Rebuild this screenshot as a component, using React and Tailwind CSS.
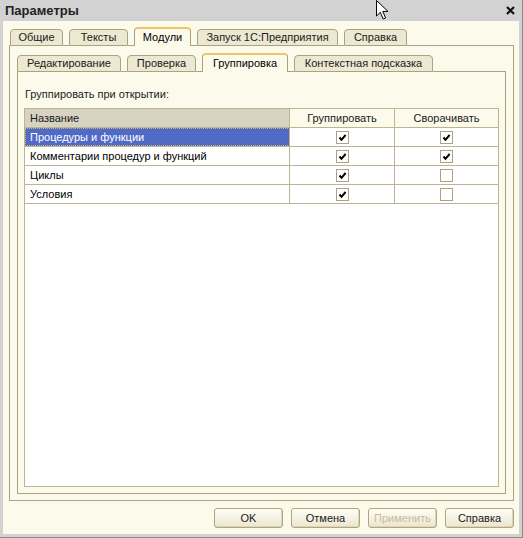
import React from "react";

const outerTabs = [
    { label: "Общие", w: "w-[53px]" },
    { label: "Тексты", w: "w-[59px]" },
    { label: "Модули", w: "w-[57px]", active: true },
    { label: "Запуск 1С:Предприятия", w: "w-[141px]" },
    { label: "Справка", w: "w-[63px]" },
];

const innerTabs = [
    { label: "Редактирование", w: "w-[104px]" },
    { label: "Проверка", w: "w-[69px]" },
    { label: "Группировка", w: "w-[86px]", active: true },
    { label: "Контекстная подсказка", w: "w-[139px]" },
];

const rows = [
    { name: "Процедуры и функции", group: true, fold: true, selected: true },
    { name: "Комментарии процедур и функций", group: true, fold: true },
    { name: "Циклы", group: true, fold: false },
    { name: "Условия", group: true, fold: false },
];

function Tab({ label, w, active }) {
    if (active) {
        return (
            <div className={`${w} h-[19px] shrink-0 flex items-center justify-center rounded-t-[4px] border border-b-0 border-[#aba37f] border-t-2 border-t-[#efc56a] bg-[#fcfaeb] text-[11px] text-black`}>
                {label}
            </div>
        );
    }
    return (
        <div className={`${w} h-[17px] shrink-0 flex items-center justify-center rounded-t-[4px] border border-[#aba37f] bg-[#ece8d1] text-[11px] text-[#1a1a1a]`}>
            {label}
        </div>
    );
}

function TabStrip({ tabs, lead }) {
    return (
        <div className="flex items-end h-[19px]">
            <div className={`${lead} self-stretch border-b border-[#aba37f]`} />
            {tabs.map((t, i) => (
                <React.Fragment key={t.label}>
                    {i > 0 && <div className="w-[6px] shrink-0 self-stretch border-b border-[#aba37f]" />}
                    <Tab {...t} />
                </React.Fragment>
            ))}
            <div className="flex-1 self-stretch border-b border-[#aba37f]" />
        </div>
    );
}

function CheckBox({ checked }) {
    return (
        <div className="w-[13px] h-[13px] border border-[#aaa283] bg-white flex items-center justify-center">
            {checked && (
                <svg width="11" height="11" viewBox="0 0 11 11">
                    <path d="M2.5 5.5 L4.5 7.8 L8.6 3" fill="none" stroke="#000" strokeWidth="2" />
                </svg>
            )}
        </div>
    );
}

function Button({ children, disabled }) {
    return (
        <button className={`w-[69px] h-[20px] rounded-[3px] border border-[#afa67f] bg-gradient-to-b from-[#fffef7] to-[#ebe6cf] text-[11px] font-normal shadow-[inset_-1px_-1px_0_#ddd6b8] ${disabled ? "text-[#c9ba98]" : "text-[#1a1a1a]"}`}>
            {children}
        </button>
    );
}

export default function App() {
    return (
        <div className="relative w-[523px] h-[538px] flex flex-col bg-[#d2d2d2] border-r border-b border-[#8a8a8a] font-['Liberation_Sans',Arial,sans-serif] overflow-hidden">
            {/* title bar */}
            <div className="h-[21px] shrink-0 flex items-center justify-between pl-[5px] pr-[7px]">
                <span className="text-[13px] font-bold text-[#222]">Параметры</span>
                <svg width="9" height="9" viewBox="0 0 9 9">
                    <path d="M1 1 L8 8 M8 1 L1 8" stroke="#111" strokeWidth="2.2" />
                </svg>
            </div>

            {/* mouse pointer */}
            <svg className="absolute left-[376px] top-0" width="14" height="21" viewBox="0 0 14 21">
                <path d="M0.5 0.5 L0.5 16 L4.3 12.3 L7.2 19 L9.6 18 L6.8 11.4 L12 11.4 Z" fill="#fff" stroke="#000" strokeWidth="1" />
            </svg>

            <div className="flex-1 flex flex-col ml-[3px] mr-[3px] mb-[3px] bg-[#fcfaeb] pl-[6px] pr-[5px] pt-[6px]">
                <TabStrip tabs={outerTabs} lead="w-px shrink-0" />
                <div className="flex-1 flex flex-col border border-t-0 border-[#aba37f] px-[7px] pt-[7px] pb-[6px]">
                    <TabStrip tabs={innerTabs} lead="w-0 shrink-0" />
                    <div className="flex-1 flex flex-col border border-t-0 border-[#aba37f] px-[6px] pb-[6px]">
                        <div className="h-[14px] mt-[15px] mb-[7px] pl-px text-[11px] leading-[14px] text-[#1a1a1a]">
                            Группировать при открытии:
                        </div>
                        <div className="flex-1 flex flex-col border border-[#bdb591] bg-white">
                            <div className="grid grid-cols-[265px_105px_1fr] h-[19px] border-b border-[#bdb591] text-[11px] text-[#1a1a1a]">
                                <div className="flex items-center pl-[5px] bg-[#d6d3c3] border-r border-[#bdb591]">Название</div>
                                <div className="flex items-center justify-center bg-[#fcfaeb] border-r border-[#bdb591]">Группировать</div>
                                <div className="flex items-center justify-center bg-[#fcfaeb]">Сворачивать</div>
                            </div>
                            {rows.map((r) => (
                                <div key={r.name} className="grid grid-cols-[265px_105px_1fr] h-[19px] border-b border-[#bdb591] text-[11px]">
                                    {r.selected ? (
                                        <div className="flex items-center pl-[5px] bg-[#506ac6] text-white border-r border-[#bdb591] outline-1 outline-dotted -outline-offset-1 outline-[#cdb567]">
                                            {r.name}
                                        </div>
                                    ) : (
                                        <div className="flex items-center pl-[5px] text-black border-r border-[#bdb591]">{r.name}</div>
                                    )}
                                    <div className="flex items-center justify-center border-r border-[#bdb591]">
                                        <CheckBox checked={r.group} />
                                    </div>
                                    <div className="flex items-center justify-center">
                                        <CheckBox checked={r.fold} />
                                    </div>
                                </div>
                            ))}
                        </div>
                    </div>
                </div>
                <div className="h-[20px] mt-[7px] mb-[6px] flex justify-end gap-[8px]">
                    <Button>OK</Button>
                    <Button>Отмена</Button>
                    <Button disabled>Применить</Button>
                    <Button>Справка</Button>
                </div>
            </div>
        </div>
    );
}
